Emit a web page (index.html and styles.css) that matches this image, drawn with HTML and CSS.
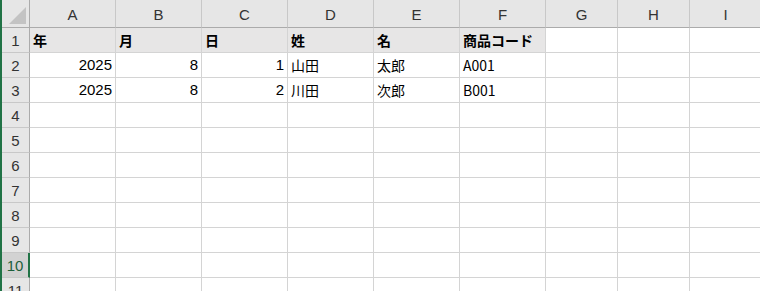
FILE: index.html
```html
<!DOCTYPE html>
<html lang="ja">
  <head>
    <meta charset="UTF-8" />
    <title>Sheet1</title>
    <link rel="stylesheet" href="styles.css">
  </head>
  <body>
    <div class="sheet">
      <div class="corner"><span class="tri"></span></div>
      <div class="colhead">A</div>
      <div class="colhead">B</div>
      <div class="colhead">C</div>
      <div class="colhead">D</div>
      <div class="colhead">E</div>
      <div class="colhead">F</div>
      <div class="colhead">G</div>
      <div class="colhead">H</div>
      <div class="colhead">I</div>

      <div class="rowhead">1</div>
      <div class="cell title">年</div>
      <div class="cell title">月</div>
      <div class="cell title">日</div>
      <div class="cell title">姓</div>
      <div class="cell title">名</div>
      <div class="cell title">商品コード</div>
      <div class="cell"></div>
      <div class="cell"></div>
      <div class="cell"></div>

      <div class="rowhead">2</div>
      <div class="cell num">2025</div>
      <div class="cell num">8</div>
      <div class="cell num">1</div>
      <div class="cell">山田</div>
      <div class="cell">太郎</div>
      <div class="cell">A001</div>
      <div class="cell"></div>
      <div class="cell"></div>
      <div class="cell"></div>

      <div class="rowhead">3</div>
      <div class="cell num">2025</div>
      <div class="cell num">8</div>
      <div class="cell num">2</div>
      <div class="cell">川田</div>
      <div class="cell">次郎</div>
      <div class="cell">B001</div>
      <div class="cell"></div>
      <div class="cell"></div>
      <div class="cell"></div>
    </div>
    <script>
      // blank rows 4..11
      const sheet = document.querySelector(".sheet");
      for (let r = 4; r <= 11; r++) {
        const head = document.createElement("div");
        head.className = r === 10 ? "rowhead active" : "rowhead";
        head.textContent = r;
        sheet.appendChild(head);
        for (let c = 0; c < 9; c++) {
          const cell = document.createElement("div");
          cell.className = "cell";
          sheet.appendChild(cell);
        }
      }
    </script>
  </body>
</html>
```

FILE: styles.css
```css
* {
  --green: #217346;
  --head: #e6e6e6;
  --grid: #d4d4d4;
  --headline: #ababab;
  box-sizing: border-box;
}
body {
  margin: 0;
  background: #fff;
  overflow: hidden;
  font-family: "Noto Sans CJK JP", "Noto Sans", sans-serif;
  color: #000;
}
.sheet {
  display: grid;
  grid-template-columns: 28px repeat(6, 86px) repeat(3, 72px);
  grid-auto-rows: 25px;
  grid-template-rows: 28px;
  border-left: 2px solid var(--green);
  width: 762px;
}
.corner {
  background: var(--head);
  border-right: 1px solid var(--headline);
  border-bottom: 1px solid var(--headline);
  position: relative;
}
.tri {
  position: absolute;
  right: 3px;
  bottom: 3px;
  width: 0;
  height: 0;
  border-left: 17px solid transparent;
  border-bottom: 17px solid #c3c3c3;
}
.colhead {
  background: var(--head);
  border-right: 1px solid #c8c8c8;
  border-bottom: 1px solid var(--headline);
  display: flex;
  align-items: center;
  justify-content: center;
  font-family: "Liberation Sans", Arial, sans-serif;
  font-size: 15px;
  color: #333;
  padding-top: 1px;
}
.rowhead {
  background: var(--head);
  border-right: 1px solid var(--headline);
  border-bottom: 1px solid #c8c8c8;
  display: flex;
  align-items: center;
  justify-content: center;
  font-family: "Liberation Sans", Arial, sans-serif;
  font-size: 15px;
  color: #333;
}
.rowhead.active {
  background: #d2d2d2;
  border-right: 2px solid var(--green);
  color: #1d5f3a;
}
.cell {
  border-right: 1px solid var(--grid);
  border-bottom: 1px solid var(--grid);
  font-size: 14px;
  line-height: 24px;
  padding: 0 3px;
  white-space: nowrap;
  overflow: hidden;
}
.cell.title {
  background: #e7e6e6;
  font-weight: bold;
}
.cell.num {
  text-align: right;
  font-family: "Liberation Sans", Arial, sans-serif;
  font-size: 15px;
}
```
